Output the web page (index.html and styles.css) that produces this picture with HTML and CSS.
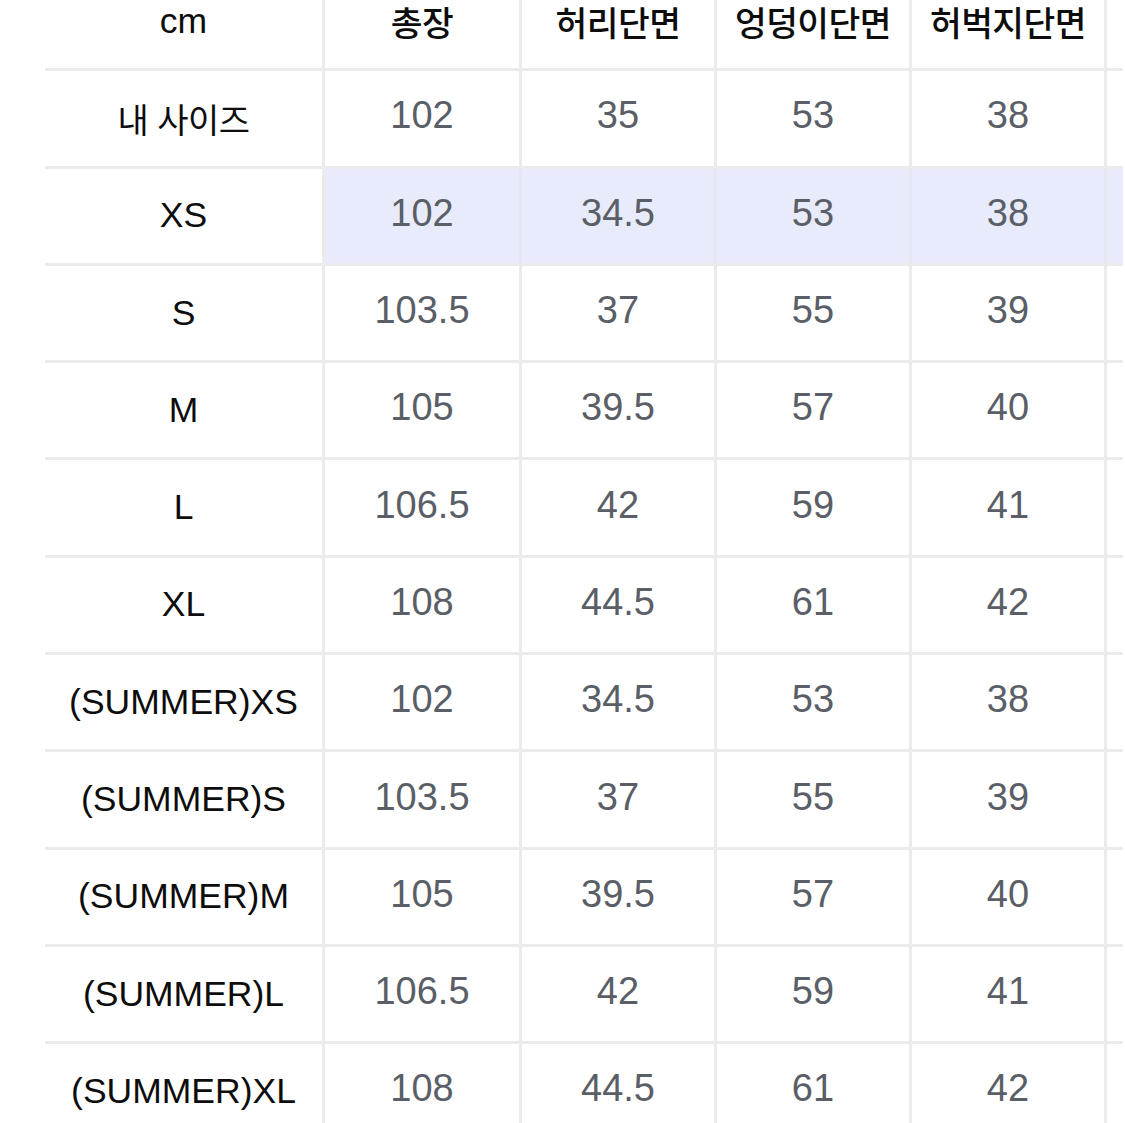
FILE: index.html
```html
<!DOCTYPE html>
<html lang="ko">
<head>
<meta charset="utf-8">
<title>사이즈표</title>
<link rel="stylesheet" href="styles.css">
</head>
<body>
<div class="sheet">
  <div class="row head">
    <div class="cell lbl">cm</div>
    <div class="cell ko">총장</div>
    <div class="cell ko">허리단면</div>
    <div class="cell ko">엉덩이단면</div>
    <div class="cell ko">허벅지단면</div>
    <div class="cell edge"></div>
  </div>
  <div class="row">
    <div class="cell lbl ko mine">내 사이즈</div>
    <div class="cell num">102</div><div class="cell num">35</div><div class="cell num">53</div><div class="cell num">38</div><div class="cell edge"></div>
  </div>
  <div class="row hl">
    <div class="cell lbl">XS</div>
    <div class="cell num">102</div><div class="cell num">34.5</div><div class="cell num">53</div><div class="cell num">38</div><div class="cell edge"></div>
  </div>
  <div class="row">
    <div class="cell lbl">S</div>
    <div class="cell num">103.5</div><div class="cell num">37</div><div class="cell num">55</div><div class="cell num">39</div><div class="cell edge"></div>
  </div>
  <div class="row">
    <div class="cell lbl">M</div>
    <div class="cell num">105</div><div class="cell num">39.5</div><div class="cell num">57</div><div class="cell num">40</div><div class="cell edge"></div>
  </div>
  <div class="row">
    <div class="cell lbl">L</div>
    <div class="cell num">106.5</div><div class="cell num">42</div><div class="cell num">59</div><div class="cell num">41</div><div class="cell edge"></div>
  </div>
  <div class="row">
    <div class="cell lbl">XL</div>
    <div class="cell num">108</div><div class="cell num">44.5</div><div class="cell num">61</div><div class="cell num">42</div><div class="cell edge"></div>
  </div>
  <div class="row">
    <div class="cell lbl">(SUMMER)XS</div>
    <div class="cell num">102</div><div class="cell num">34.5</div><div class="cell num">53</div><div class="cell num">38</div><div class="cell edge"></div>
  </div>
  <div class="row">
    <div class="cell lbl">(SUMMER)S</div>
    <div class="cell num">103.5</div><div class="cell num">37</div><div class="cell num">55</div><div class="cell num">39</div><div class="cell edge"></div>
  </div>
  <div class="row">
    <div class="cell lbl">(SUMMER)M</div>
    <div class="cell num">105</div><div class="cell num">39.5</div><div class="cell num">57</div><div class="cell num">40</div><div class="cell edge"></div>
  </div>
  <div class="row">
    <div class="cell lbl">(SUMMER)L</div>
    <div class="cell num">106.5</div><div class="cell num">42</div><div class="cell num">59</div><div class="cell num">41</div><div class="cell edge"></div>
  </div>
  <div class="row">
    <div class="cell lbl">(SUMMER)XL</div>
    <div class="cell num">108</div><div class="cell num">44.5</div><div class="cell num">61</div><div class="cell num">42</div><div class="cell edge"></div>
  </div>
</div>
</body>
</html>
```
FILE: styles.css
```css
html, body {
  margin: 0;
  padding: 0;
  background: #ffffff;
  overflow: hidden;
}
body {
  width: 1125px;
  height: 1123px;
  font-family: "Liberation Sans", "Noto Sans CJK KR", Arial, sans-serif;
}
.sheet {
  margin-top: -26px;
  margin-left: 45px;
  width: 1078px;
}
.row {
  display: grid;
  grid-template-columns: 280px 197px 195px 195px 195px 16px;
  height: 97.3px;
}
.cell {
  box-sizing: border-box;
  border-bottom: 3px solid #ebebed;
  border-right: 3px solid #ebebed;
  display: flex;
  align-items: center;
  justify-content: center;
  color: #0d0d0d;
  font-size: 35.5px;
  white-space: nowrap;
}
.cell.edge {
  border-right: none;
}
.cell.ko {
  font-family: "Noto Sans CJK KR", "Liberation Sans", sans-serif;
  font-size: 34.5px;
  font-weight: 500;
  letter-spacing: -0.5px;
}
.cell.ko.mine {
  font-weight: 400;
  font-size: 34px;
}
.cell.num {
  color: #5a5e66;
  font-size: 38px;
  padding-bottom: 5px;
}
.row.hl .cell.num,
.row.hl .cell.edge {
  background: #e7ebfb;
  border-right-color: #e4e7f2;
}
```
